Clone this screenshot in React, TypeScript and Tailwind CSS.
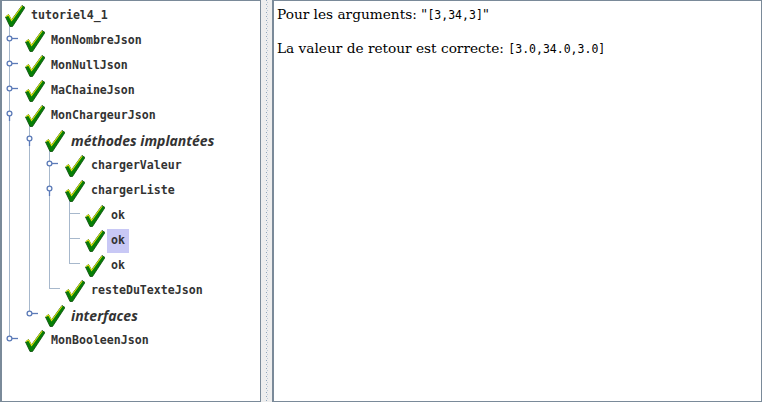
import React from "react"

type Node = {
  label: string
  level: number
  kind?: "mono" | "italic"
  selected?: boolean
}

const nodes: Node[] = [
  { label: "tutoriel4_1", level: 0 },
  { label: "MonNombreJson", level: 1 },
  { label: "MonNullJson", level: 1 },
  { label: "MaChaineJson", level: 1 },
  { label: "MonChargeurJson", level: 1 },
  { label: "méthodes implantées", level: 2, kind: "italic" },
  { label: "chargerValeur", level: 3 },
  { label: "chargerListe", level: 3 },
  { label: "ok", level: 4 },
  { label: "ok", level: 4, selected: true },
  { label: "ok", level: 4 },
  { label: "resteDuTexteJson", level: 3 },
  { label: "interfaces", level: 2, kind: "italic" },
  { label: "MonBooleenJson", level: 1 },
]

// handles: row index, x center, expanded?
const handles: [number, number, boolean][] = [
  [1, 7, false],
  [2, 7, false],
  [3, 7, false],
  [4, 7, true],
  [5, 27, true],
  [6, 47, false],
  [7, 47, true],
  [12, 27, false],
  [13, 7, false],
]

const rowY = (i: number) => 12 + 25 * i

const Check = () => (
  <svg width="20" height="22" viewBox="0 0 20 22" className="shrink-0">
    <polygon points="0.5,12 3.5,9.5 6.5,15 17,0.5 20,2.5 7.5,21.5 5,21.5" fill="#067f06" stroke="#0b4a0b" strokeWidth="0.8" />
    <polyline points="0.8,11.6 3.5,10 6.6,15.6 17.2,1" fill="none" stroke="#e0e010" strokeWidth="1.1" />
  </svg>
)

const TreeLines = () => (
  <svg className="absolute left-0 top-0 pointer-events-none" width="258" height="400">
    <g stroke="#a7b8cc" strokeWidth="1" shapeRendering="crispEdges">
      <line x1="7.5" y1="25" x2="7.5" y2={rowY(13)} />
      <line x1="27.5" y1={rowY(4) + 4} x2="27.5" y2={rowY(12)} />
      <line x1="47.5" y1={rowY(5) + 4} x2="47.5" y2={rowY(11) + 0.5} />
      <line x1="47.5" y1={rowY(11) + 0.5} x2="58" y2={rowY(11) + 0.5} />
      <line x1="67.5" y1={rowY(7) + 4} x2="67.5" y2={rowY(10) + 0.5} />
      {[8, 9, 10].map((i) => (
        <line key={i} x1="67.5" y1={rowY(i) + 0.5} x2="78" y2={rowY(i) + 0.5} />
      ))}
    </g>
    <g stroke="#5c7bb8" strokeWidth="1.3" fill="white">
      {handles.map(([i, x, open]) => (
        <g key={i}>
          {open ? (
            <line x1={x + 0.5} y1={rowY(i) + 3} x2={x + 0.5} y2={rowY(i) + 8} />
          ) : (
            <line x1={x + 3} y1={rowY(i) + 0.5} x2={x + 9} y2={rowY(i) + 0.5} />
          )}
          <circle cx={x + 0.5} cy={rowY(i) + 0.5} r="2.4" />
        </g>
      ))}
    </g>
  </svg>
)

const Dots = () => (
  <svg width="10" height="402">
    <defs>
      <pattern id="grip" width="10" height="4" patternUnits="userSpaceOnUse">
        <rect x="5" y="0" width="1" height="1" fill="#8fa6bd" />
        <rect x="6" y="2" width="1" height="1" fill="#c0ccd8" />
      </pattern>
    </defs>
    <rect width="10" height="402" fill="url(#grip)" />
  </svg>
)

export default function App() {
  return (
    <div className="w-[764px] h-[404px] bg-white flex font-['DejaVu_Sans',sans-serif]">
      <div className="w-[261px] h-[402px] border-t border-b border-r border-l-2 border-[#7a8a99] bg-white relative overflow-hidden">
        <TreeLines />
        <div className="relative pt-[2px]">
          {nodes.map((n, i) => (
            <div key={i} className="h-[25px] flex items-center" style={{ paddingLeft: 3 + n.level * 20 }}>
              <Check />
              <span
                className={
                  "ml-[2px] px-[4px] h-[24px] flex items-center text-[#333333] " +
                  (n.kind === "italic"
                    ? "italic font-bold text-[14px] font-['Open_Sans',sans-serif] "
                    : "font-bold font-['DejaVu_Sans_Mono',monospace] text-[11.6px] ") +
                  (n.selected ? "bg-[#c8c8f5]" : "")
                }
              >
                {n.label}
              </span>
            </div>
          ))}
        </div>
      </div>
      <div className="w-[11px] h-[402px] bg-[#eeeeee] flex">
        <Dots />
      </div>
      <div className="w-[490px] h-[402px] border-t border-b border-r border-l-2 border-[#7a8a99] bg-white px-[3px] pt-[3px] font-['DejaVu_Serif',serif] text-[13.7px] text-black">
        <p className="h-[20px] leading-[20px]">
          Pour les arguments: "<span className="font-['DejaVu_Sans_Mono',monospace] text-[11.5px]">[3,34,3]</span>"
        </p>
        <p className="mt-[14px] h-[20px] leading-[20px]">
          La valeur de retour est correcte: <span className="font-['DejaVu_Sans_Mono',monospace] text-[11.5px]">[3.0,34.0,3.0]</span>
        </p>
      </div>
    </div>
  )
}
